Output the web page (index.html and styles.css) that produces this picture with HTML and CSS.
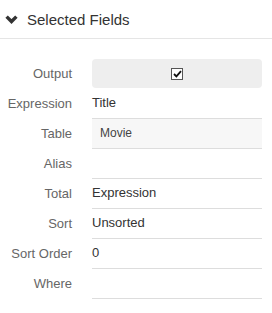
FILE: index.html
```html
<!DOCTYPE html>
<html>
<head>
    <meta charset="UTF-8">
    <title>Selected Fields</title>
    <link rel="stylesheet" href="styles.css">
</head>
<body>
    <!-- Collapsible panel header -->
    <div class="panel-header">
        <svg class="chevron" width="13" height="9" viewBox="0 0 13 9">
            <path d="M1.6 1.6 L6.5 6.5 L11.4 1.6" fill="none" stroke="#333" stroke-width="3.4"/>
        </svg>
        <span class="panel-title">Selected Fields</span>
    </div>

    <div class="field-list">
        <div class="field-row">
            <div class="field-label">Output</div>
            <div class="field-value output-cell">
                <span class="check-box">
                    <svg width="9" height="8" viewBox="0 0 9 8">
                        <path d="M1 4 L3.4 6.4 L8 1.2" fill="none" stroke="#111" stroke-width="1.8"/>
                    </svg>
                </span>
            </div>
        </div>
        <div class="field-row">
            <div class="field-label">Expression</div>
            <div class="field-value">Title</div>
        </div>
        <div class="field-row">
            <div class="field-label">Table</div>
            <div class="field-value table-cell">Movie</div>
        </div>
        <div class="field-row">
            <div class="field-label">Alias</div>
            <div class="field-value"></div>
        </div>
        <div class="field-row">
            <div class="field-label">Total</div>
            <div class="field-value">Expression</div>
        </div>
        <div class="field-row">
            <div class="field-label">Sort</div>
            <div class="field-value">Unsorted</div>
        </div>
        <div class="field-row">
            <div class="field-label">Sort Order</div>
            <div class="field-value">0</div>
        </div>
        <div class="field-row">
            <div class="field-label">Where</div>
            <div class="field-value"></div>
        </div>
    </div>
</body>
</html>
```

FILE: styles.css
```css
body {
    margin: 0;
    font-family: "Liberation Sans", Arial, Helvetica, sans-serif;
    background-color: #fff;
    color: #333;
}
.panel-header {
    display: flex;
    align-items: center;
    height: 38px;
    border-bottom: 1px solid #e5e5e5;
    padding-left: 5px;
}
.chevron {
    margin-right: 9px;
    margin-top: 1px;
}
.panel-title {
    font-size: 15px;
    color: #333;
}
.field-list {
    margin-top: 20px;
    padding-right: 10px;
}
.field-row {
    display: grid;
    grid-template-columns: 72px 1fr;
    column-gap: 20px;
    align-items: center;
    height: 30px;
}
.field-label {
    text-align: right;
    font-size: 13px;
    color: #666;
    margin-top: -2px;
}
.field-value {
    box-sizing: border-box;
    height: 30px;
    display: flex;
    align-items: center;
    font-size: 13px;
    color: #333;
    border-bottom: 1px solid #ddd;
    padding-bottom: 2px;
}
.output-cell {
    justify-content: center;
    background-color: #eee;
    border-bottom: none;
    border-radius: 4px;
    height: 29px;
    margin-bottom: 1px;
    padding-bottom: 0;
}
.check-box {
    box-sizing: border-box;
    width: 12px;
    height: 12px;
    border: 1px solid #555;
    background-color: #fff;
    display: flex;
    align-items: center;
    justify-content: center;
}
.table-cell {
    background-color: #f7f7f7;
    padding-left: 8px;
    font-size: 12px;
    color: #444;
}
```
